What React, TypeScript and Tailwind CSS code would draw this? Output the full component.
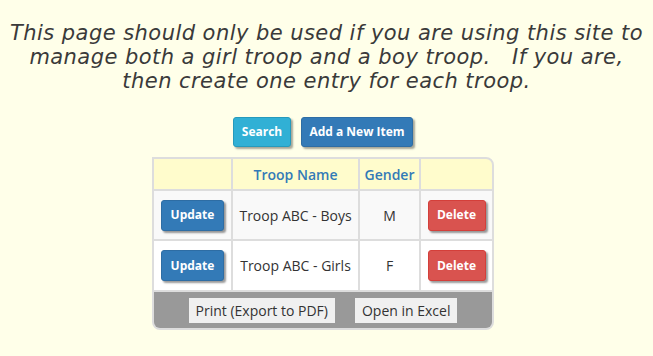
import React from "react";

const font = { fontFamily: '"Open Sans", "Noto Sans", sans-serif' };

export default function App() {
  const rows = [
    { name: "Troop ABC - Boys", g: "M", bg: "bg-[#f9f9f9]" },
    { name: "Troop ABC - Girls", g: "F", bg: "bg-white" },
  ];
  return (
    <div className="w-[653px] h-[356px] bg-[#ffffe9] overflow-hidden" style={font}>
      <p
        className="pt-[21px] text-center italic text-[21px] leading-[24px] tracking-[0.45px] text-[#3a3a3a] whitespace-nowrap"
        style={{ fontFamily: '"DejaVu Sans", sans-serif' }}
      >
        This page should only be used if you are using this site to
        <br />
        manage both a girl troop and a boy troop.&nbsp;&nbsp; If you are,
        <br />
        then create one entry for each troop.
      </p>
      <div className="pr-[7px]">
        <div className="flex justify-center gap-[10px] mt-[24px]">
          <button className="h-[30px] w-[58px] rounded-[3px] bg-[#31b0d5] border border-[#269abc] text-white text-[12px] font-bold shadow-[2px_2px_2px_rgba(0,0,0,0.35)]">
            Search
          </button>
          <button className="h-[30px] w-[112px] rounded-[3px] bg-[#337ab7] border border-[#2e6da4] text-white text-[12px] font-bold shadow-[2px_2px_2px_rgba(0,0,0,0.35)]">
            Add a New Item
          </button>
        </div>
        <div className="flex justify-center mt-[10px]">
          <div className="w-[342px] border-2 border-[#dddddd] rounded-tr-[8px] rounded-b-[8px] overflow-hidden bg-[#dddddd]">
            <table className="w-full border-collapse text-[14px]">
              <thead>
                <tr className="bg-[#fffccc] h-[31px]">
                  <th className="w-[78px] border-r-2 border-[#dddddd]"></th>
                  <th className="w-[127px] border-r-2 border-[#dddddd] text-[#337ab7] font-semibold">Troop Name</th>
                  <th className="w-[61px] border-r-2 border-[#dddddd] text-[#337ab7] font-semibold">Gender</th>
                  <th></th>
                </tr>
              </thead>
              <tbody>
                {rows.map((r) => (
                  <tr key={r.name} className={`${r.bg} h-[50px] border-t-2 border-[#dddddd]`}>
                    <td className="border-r-2 border-[#dddddd] text-center">
                      <button className="h-[31px] w-[63px] rounded-[3px] bg-[#337ab7] border border-[#2e6da4] text-white text-[12px] font-bold shadow-[2px_2px_2px_rgba(0,0,0,0.4)]">
                        Update
                      </button>
                    </td>
                    <td className="border-r-2 border-[#dddddd] text-center text-[#333] whitespace-nowrap">{r.name}</td>
                    <td className="border-r-2 border-[#dddddd] text-center text-[#333]">{r.g}</td>
                    <td className="text-center">
                      <button className="h-[31px] w-[58px] rounded-[3px] bg-[#d9534f] border border-[#d43f3a] text-white text-[12px] font-bold shadow-[2px_2px_2px_rgba(0,0,0,0.4)]">
                        Delete
                      </button>
                    </td>
                  </tr>
                ))}
              </tbody>
            </table>
            <div className="bg-[#999999] h-[38px] flex justify-center items-center gap-[20px] border-t-2 border-[#dddddd]">
              <button className="h-[25px] px-[7px] bg-[#f0f0f0] text-[#333] text-[14px]">Print (Export to PDF)</button>
              <button className="h-[25px] px-[7px] bg-[#f0f0f0] text-[#333] text-[14px]">Open in Excel</button>
            </div>
          </div>
        </div>
      </div>
    </div>
  );
}
